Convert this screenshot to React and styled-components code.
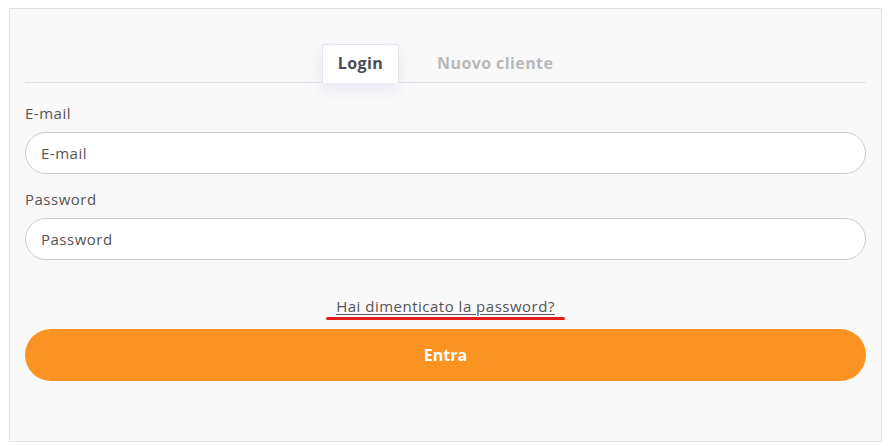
import React, { useState } from "react";
import styled, { createGlobalStyle } from "styled-components";

const GlobalStyle = createGlobalStyle`
  body {
    margin: 8px;
    background: #ffffff;
    font-family: "Open Sans", "Liberation Sans", sans-serif;
  }
`;

const App = () => {
  const [ tab, setTab ] = useState("login");

  return (
    <>
      <GlobalStyle />
      <Panel>
        <Tabs>
          <Tab active={tab === "login"} onClick={() => setTab("login")}>Login</Tab>
          <Tab active={tab === "new"} onClick={() => setTab("new")}>Nuovo cliente</Tab>
        </Tabs>
        <Form onSubmit={e => e.preventDefault()}>
          <Field>
            <Label htmlFor="email">E-mail</Label>
            <Input id="email" type="email" placeholder="E-mail" />
          </Field>
          <Field>
            <Label htmlFor="password">Password</Label>
            <Input id="password" type="password" placeholder="Password" />
          </Field>
          <Forgot>
            <ForgotLink href="#">Hai dimenticato la password?</ForgotLink>
          </Forgot>
          <Submit type="submit">Entra</Submit>
        </Form>
      </Panel>
    </>
  );
}

export default App;

const Panel = styled.div`
  box-sizing: border-box;
  width: 873px;
  height: 434px;
  margin-left: 1px;
  padding: 35px 15px 0;

  border: 1px solid #e2e2e2;
  background-color: #f9f9f9;
`;

const Tabs = styled.div`
  display: flex;
  justify-content: center;
  gap: 22px;
  height: 38px;

  border-bottom: 1px solid #dedfe8;
`;

const Tab = styled.button`
  box-sizing: border-box;
  height: 39px;
  padding: 0 15px 2px;

  border: 1px solid ${p => (p.active ? "#e3e5ee" : "transparent")};
  border-bottom: none;
  border-radius: 3px 3px 0 0;
  background-color: ${p => (p.active ? "#ffffff" : "transparent")};
  box-shadow: ${p => (p.active ? "0 6px 14px rgba(150, 160, 230, 0.18)" : "none")};
  color: ${p => (p.active ? "#4a4d55" : "#b8b8b8")};
  font-family: inherit;
  font-size: 16px;
  font-weight: 700;
  letter-spacing: 0.4px;
  line-height: 1;

  &:hover {
    cursor: pointer;
  }
`;

const Form = styled.form`
  display: flex;
  flex-direction: column;
  padding-top: 20px;
`;

const Field = styled.div`
  display: flex;
  flex-direction: column;
  gap: 9px;
  margin-bottom: 15px;
`;

const Label = styled.label`
  color: #555555;
  font-size: 15px;
  letter-spacing: 0.5px;
  line-height: 20px;
`;

const Input = styled.input`
  box-sizing: border-box;
  width: 100%;
  height: 42px;
  padding: 0 15px;

  border: 1px solid #cccccc;
  border-radius: 21px;
  background-color: #ffffff;
  color: #333333;
  font-family: inherit;
  font-size: 15px;
  letter-spacing: 0.5px;
  outline: none;

  &::placeholder {
    color: #555555;
  }
`;

const Forgot = styled.div`
  display: flex;
  justify-content: center;
  margin-top: 21px;
  margin-bottom: 10px;
`;

const ForgotLink = styled.a`
  position: relative;
  padding: 0 10px 3px;

  color: #555555;
  font-size: 15px;
  letter-spacing: 0.5px;
  line-height: 20px;
  text-decoration: underline;
  text-underline-offset: 2px;

  &::after {
    content: "";
    position: absolute;
    left: 0;
    right: 0;
    bottom: -1px;
    height: 3px;
    border-radius: 2px;
    background-color: #e41c1c;
  }
`;

const Submit = styled.button`
  height: 52px;

  border: none;
  border-radius: 26px;
  background-color: #fb9322;
  color: #ffffff;
  font-family: inherit;
  font-size: 16px;
  font-weight: 700;

  &:hover {
    cursor: pointer;
  }
`;
